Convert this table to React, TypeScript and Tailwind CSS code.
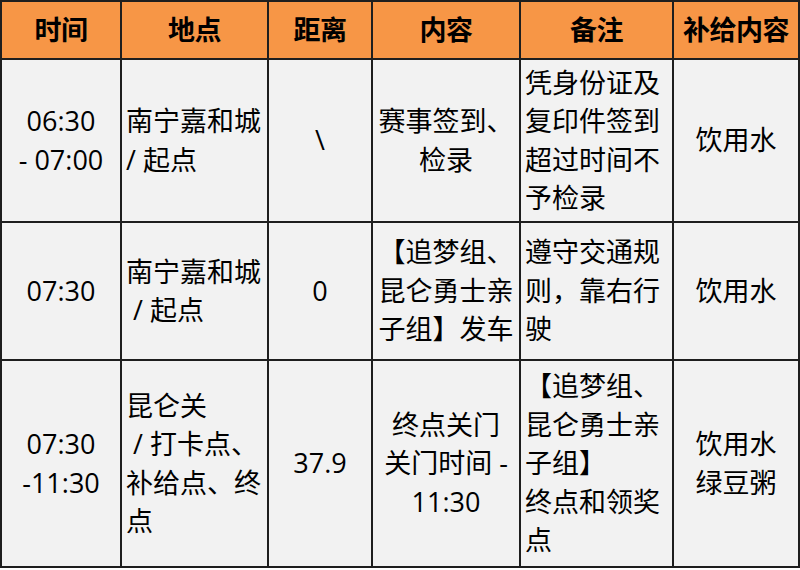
import React from "react";

type Cell = { lines: string[]; align: "center" | "left" };

const rows: { h: string; cells: Cell[] }[] = [
  {
    h: "h-[161px]",
    cells: [
      { lines: ["06:30", "- 07:00"], align: "center" },
      { lines: ["南宁嘉和城", "/ 起点"], align: "left" },
      { lines: ["\\"], align: "center" },
      { lines: ["赛事签到、", "检录"], align: "center" },
      { lines: ["凭身份证及", "复印件签到", "超过时间不", "予检录"], align: "left" },
      { lines: ["饮用水"], align: "center" },
    ],
  },
  {
    h: "h-[136px]",
    cells: [
      { lines: ["07:30"], align: "center" },
      { lines: ["南宁嘉和城", " / 起点"], align: "left" },
      { lines: ["0"], align: "center" },
      { lines: ["【追梦组、", "昆仑勇士亲", "子组】发车"], align: "center" },
      { lines: ["遵守交通规", "则，靠右行", "驶"], align: "left" },
      { lines: ["饮用水"], align: "center" },
    ],
  },
  {
    h: "h-[205px]",
    cells: [
      { lines: ["07:30", "-11:30"], align: "center" },
      { lines: ["昆仑关", " / 打卡点、", "补给点、终", "点"], align: "left" },
      { lines: ["37.9"], align: "center" },
      { lines: ["终点关门", "关门时间 -", "11:30"], align: "center" },
      { lines: ["【追梦组、", "昆仑勇士亲", "子组】", "终点和领奖", "点"], align: "left" },
      { lines: ["饮用水", "绿豆粥"], align: "center" },
    ],
  },
];

const headers = ["时间", "地点", "距离", "内容", "备注", "补给内容"];

export default function App() {
  return (
    <div
      className="w-[800px] h-[570px] bg-white"
      style={{ fontFamily: '"Open Sans", "Noto Sans CJK SC", sans-serif' }}
    >
      <div className="grid grid-cols-[118px_145px_102px_146px_151px_124px] gap-[2px] p-[2px] bg-[#1e1e1e] w-[800px] text-black text-[27px]">
        {headers.map((h) => (
          <div
            key={h}
            className="h-[56px] bg-[#f79646] flex items-center justify-center font-bold tracking-[-0.5px] whitespace-nowrap"
          >
            {h}
          </div>
        ))}
        {rows.map((r, ri) =>
          r.cells.map((c, ci) => (
            <div
              key={`${ri}-${ci}`}
              className={`${r.h} bg-[#f2f2f2] flex flex-col justify-center leading-[38.5px] whitespace-pre ${
                c.align === "center" ? "items-center text-center" : "items-start text-left pl-[4px]"
              }`}
            >
              {c.lines.map((l, li) => (
                <div key={li}>{l}</div>
              ))}
            </div>
          ))
        )}
      </div>
    </div>
  );
}
